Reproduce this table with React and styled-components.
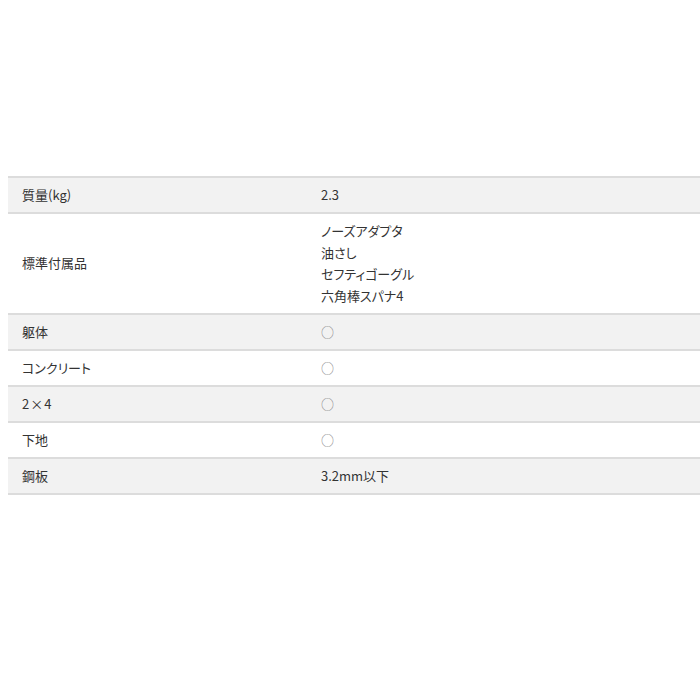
import React from "react";
import styled, { createGlobalStyle } from "styled-components";

const Global = createGlobalStyle`
    body {
        margin: 0;
        padding: 176px 0 0 8px;
        overflow: hidden;
        background: #fff;
        font-family: "Noto Sans CJK JP", "Noto Sans", sans-serif;
        color: #333;
    }
`;

const Table = styled.div`
    display: grid;
    grid-template-columns: 299px 1fr;
    border-top: 2px solid #dcdcdc;
`;

const Row = styled.div`
    display: contents;
`;

const Cell = styled.div`
    background: ${(p) => (p.$shade ? "#f2f2f2" : "#fff")};
    border-bottom: 2px solid #dcdcdc;
    padding: 6px 14px 6.5px;
    font-size: 13px;
    line-height: 21.5px;
    font-feature-settings: "palt";
    display: flex;
    flex-direction: column;
    justify-content: center;
`;

const Mark = styled.span`
    color: #888;
`;

const Times = styled.span`
    font-feature-settings: "fwid";
    margin: 0 1px;
`;

const rows = [
    { label: "質量(kg)", value: ["2.3"] },
    {
        label: "標準付属品",
        value: ["ノーズアダプタ", "油さし", "セフティゴーグル", "六角棒スパナ4"],
    },
    { label: "躯体", mark: true },
    { label: "コンクリート", mark: true },
    {
        label: (
            <span>
                2<Times>×</Times>4
            </span>
        ),
        key: "2x4",
        mark: true,
    },
    { label: "下地", mark: true },
    { label: "鋼板", value: ["3.2mm以下"] },
];

export default function App() {
    return (
        <>
            <Global />
            <Table>
                {rows.map((r, i) => (
                    <Row key={r.key || r.label}>
                        <Cell $shade={i % 2 === 0}>{r.label}</Cell>
                        <Cell $shade={i % 2 === 0}>
                            {r.mark ? (
                                <Mark>○</Mark>
                            ) : (
                                r.value.map((v) => <div key={v}>{v}</div>)
                            )}
                        </Cell>
                    </Row>
                ))}
            </Table>
        </>
    );
}
